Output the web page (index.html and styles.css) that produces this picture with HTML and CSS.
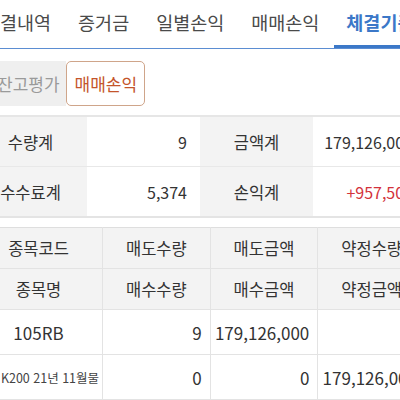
FILE: index.html
```html
<!DOCTYPE html>
<html lang="ko">
<head>
    <meta charset="UTF-8">
    <title>체결기준</title>
    <link rel="stylesheet" href="styles.css">
</head>
<body>
<div class="page">
    <ul class="tabs">
        <li>체결내역</li>
        <li>증거금</li>
        <li>일별손익</li>
        <li>매매손익</li>
        <li class="on">체결기준</li>
    </ul>
    <div class="seg">
        <span class="seg-item">잔고평가</span>
        <span class="seg-item on">매매손익</span>
    </div>
    <table class="sum">
        <tr>
            <th>수량계</th>
            <td>9</td>
            <th>금액계</th>
            <td>179,126,000</td>
        </tr>
        <tr>
            <th>수수료계</th>
            <td>5,374</td>
            <th>손익계</th>
            <td class="up">+957,500</td>
        </tr>
    </table>
    <table class="list">
        <colgroup>
            <col class="c1"><col class="c2"><col class="c3"><col class="c4">
        </colgroup>
        <tr class="head">
            <th>종목코드</th>
            <th>매도수량</th>
            <th>매도금액</th>
            <th>약정수량</th>
        </tr>
        <tr class="head">
            <th>종목명</th>
            <th>매수수량</th>
            <th>매수금액</th>
            <th>약정금액</th>
        </tr>
        <tr>
            <td class="name">105RB</td>
            <td>9</td>
            <td>179,126,000</td>
            <td></td>
        </tr>
        <tr>
            <td class="name small">미니K200 21년 11월물</td>
            <td>0</td>
            <td>0</td>
            <td>179,126,000</td>
        </tr>
    </table>
</div>
</body>
</html>
```

FILE: styles.css
```css
*{
    margin: 0;
    padding: 0;
}
li{
    list-style: none;
}
body{
    background: #fff;
    overflow: hidden;
    font-family: "Noto Sans CJK KR", "Noto Sans", sans-serif;
    color: #333;
}
/* content is scrolled a little to the right */
.page{
    width: 452px;
    margin-left: -26px;
}
.tabs{
    display: flex;
    gap: 3px;
    margin-left: -3px;
    border-bottom: 1px solid #5b8dd2;
    height: 48px;
}
.tabs li{
    padding: 0 12px;
    font-size: 18.5px;
    line-height: 45px;
    color: #4a4a4a;
    border-bottom: 3px solid transparent;
    white-space: nowrap;
}
.tabs li.on{
    color: #3b78c8;
    font-weight: bold;
    border-bottom-color: #3b78c8;
}
.seg{
    display: flex;
    margin: 12px 0 0 15px;
    height: 45px;
}
.seg-item{
    display: flex;
    align-items: center;
    padding: 0 6px 0 8px;
    font-size: 17px;
    color: #9a9a9a;
    background: #efefef;
    border-radius: 5px 0 0 5px;
}
.seg-item.on{
    padding: 0 7px 0 8px;
    color: #c4552b;
    background: #fff;
    border: 1px solid #cfa58a;
    border-radius: 5px;
}
table{
    width: 452px;
    border-collapse: collapse;
    table-layout: fixed;
}
.sum{
    margin-top: 9px;
    border-top: 2px solid #e6e6e6;
    border-bottom: 2px solid #e4e4e4;
}
.sum th,
.sum td{
    height: 49px;
    font-size: 16.5px;
    font-weight: normal;
    border-bottom: 1px solid #e8e8e8;
}
.sum th{
    background: #f3f3f3;
    color: #333;
}
.sum td{
    text-align: right;
    padding-right: 13px;
    font-size: 16px;
}
.sum td.up{
    color: #d3323b;
}
.list{
    margin-top: 9px;
    border-top: 1px solid #dedede;
}
.list .c1{
    width: 128px;
}
.list th,
.list td{
    border: 1px solid #e3e3e3;
    border-top: 0;
}
.list th{
    height: 40px;
    background: #f3f3f3;
    font-size: 16.5px;
    font-weight: normal;
    color: #333;
}
.list td{
    height: 44px;
    text-align: right;
    padding-right: 8px;
    font-size: 17px;
    color: #333;
    white-space: nowrap;
}
.list td.name{
    text-align: center;
    padding: 0;
    overflow: visible;
}
.list td.small{
    font-size: 12.5px;
    color: #444;
}
```
